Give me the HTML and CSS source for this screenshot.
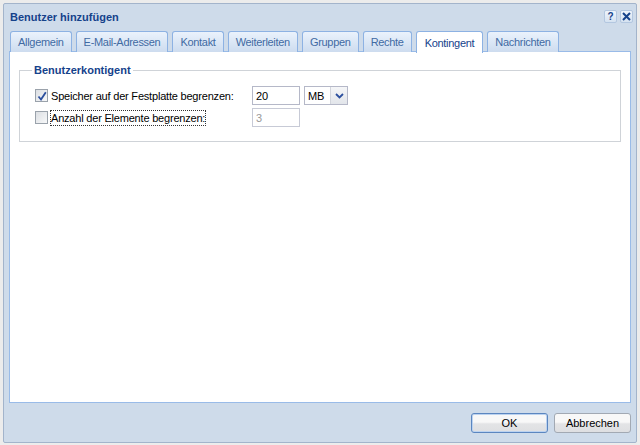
FILE: index.html
```html
<!DOCTYPE html>
<html lang="de">
<head>
<meta charset="utf-8">
<title>Benutzer hinzufügen</title>
<link rel="stylesheet" href="styles.css">
</head>
<body>
<div class="window">
  <div class="header">
    <span class="title">Benutzer hinzufügen</span>
    <div class="tools">
      <span class="tool">?</span>
      <span class="tool">
        <svg width="9" height="9" viewBox="0 0 9 9"><path d="M1 1L8 8M8 1L1 8" stroke="#15428b" stroke-width="2"/></svg>
      </span>
    </div>
  </div>
  <div class="tabs">
    <span class="tab">Allgemein</span>
    <span class="tab">E-Mail-Adressen</span>
    <span class="tab">Kontakt</span>
    <span class="tab">Weiterleiten</span>
    <span class="tab">Gruppen</span>
    <span class="tab">Rechte</span>
    <span class="tab active">Kontingent</span>
    <span class="tab">Nachrichten</span>
  </div>
  <div class="panel">
    <fieldset class="group">
      <legend>Benutzerkontigent</legend>
      <div class="row">
        <span class="check checked">
          <svg width="10" height="10" viewBox="0 0 10 10"><path d="M1.5 5.5L4 8.5L8.8 1.2" stroke="#2c4f9e" stroke-width="1.8" fill="none"/></svg>
        </span>
        <span class="label"><span class="text">Speicher auf der Festplatte begrenzen:</span></span>
        <span class="input">20</span>
        <span class="select"><span class="selval">MB</span><span class="arrow"><svg width="9" height="6" viewBox="0 0 9 6"><path d="M1 1L4.5 4.5L8 1" stroke="#2c4f9e" stroke-width="1.8" fill="none"/></svg></span></span>
      </div>
      <div class="row">
        <span class="check"></span>
        <span class="label"><span class="text focus">Anzahl der Elemente begrenzen:</span></span>
        <span class="input disabled">3</span>
      </div>
    </fieldset>
  </div>
  <div class="footer">
    <span class="btn default">OK</span>
    <span class="btn">Abbrechen</span>
  </div>
</div>
</body>
</html>
```
FILE: styles.css
```css
html, body {
  margin: 0;
  padding: 0;
}
body {
  background: #ececec;
  padding: 3px 3px 0 3px;
  font-family: "Liberation Sans", Arial, sans-serif;
  font-size: 11px;
  color: #000;
}
.window {
  box-sizing: border-box;
  height: 440px;
  border: 1px solid #a3b4cb;
  border-radius: 2px;
  background: #cedbea;
  display: flex;
  flex-direction: column;
  padding: 0 5px;
}
.header {
  height: 23px;
  display: flex;
  align-items: center;
  justify-content: space-between;
  padding-left: 1px;
}
.title {
  font-weight: bold;
  color: #15428b;
  font-size: 11px;
  padding-top: 2px;
}
.tools {
  display: flex;
  gap: 3px;
  margin-right: -2px;
  padding-top: 2px;
}
.tool {
  width: 11px;
  height: 11px;
  background: linear-gradient(#eef4fb, #d5e2f1);
  border: 1px solid #b3c7e0;
  border-radius: 2px;
  display: flex;
  align-items: center;
  justify-content: center;
  font-weight: bold;
  font-size: 10px;
  color: #15428b;
}
.tabs {
  display: flex;
  gap: 4px;
  padding-left: 1px;
  padding-top: 4px;
  height: 20px;
  position: relative;
  z-index: 1;
  letter-spacing: -0.3px;
}
.tab {
  box-sizing: border-box;
  height: 21px;
  padding: 0 7px;
  border: 1px solid #8db2e3;
  border-bottom: none;
  border-radius: 3px 3px 0 0;
  background: linear-gradient(#eaf2fc, #cddcef);
  color: #416aa3;
  display: flex;
  align-items: center;
}
.tab.active {
  background: #fff;
  color: #15428b;
  height: 22px;
  padding: 0 8px;
}
.panel {
  flex: 1;
  background: #fff;
  border: 1px solid #99bbe8;
  padding: 12px 9px 0 9px;
}
.group {
  margin: 0;
  border: 1px solid #cfd3d8;
  padding: 10px 10px 14px 15px;
  display: flex;
  flex-direction: column;
  gap: 3px;
}
.group legend {
  font-weight: bold;
  color: #15428b;
  font-size: 11px;
  padding: 0 2px;
  margin-left: -3px;
}
.row {
  display: flex;
  align-items: center;
  height: 19px;
  letter-spacing: -0.2px;
}
.check {
  box-sizing: border-box;
  width: 13px;
  height: 13px;
  border: 1px solid #9aa2ab;
  background: linear-gradient(135deg, #dcdfe3, #f7f8f9);
  display: flex;
  align-items: center;
  justify-content: center;
  margin-right: 2px;
}
.label {
  width: 201px;
  padding-left: 1px;
  display: flex;
}
.text.focus {
  outline: 1px dotted #333;
  height: 14px;
  line-height: 14px;
}
.input {
  box-sizing: border-box;
  width: 48px;
  height: 19px;
  border: 1px solid #b5b8c8;
  padding: 0 3px;
  display: flex;
  align-items: center;
  background: #fff;
}
.input.disabled {
  color: #999;
  border-color: #c7cad6;
}
.select {
  box-sizing: border-box;
  margin-left: 4px;
  width: 44px;
  height: 19px;
  border: 1px solid #b5b8c8;
  display: flex;
}
.selval {
  flex: 1;
  padding-left: 3px;
  display: flex;
  align-items: center;
}
.arrow {
  width: 16px;
  background: linear-gradient(#f5f6f8, #e2e5ea);
  border-left: 1px solid #d2d5dc;
  display: flex;
  align-items: center;
  justify-content: center;
}
.footer {
  height: 38px;
  display: flex;
  align-items: center;
  justify-content: flex-end;
  gap: 6px;
  padding-top: 1px;
}
.btn {
  box-sizing: border-box;
  width: 77px;
  height: 20px;
  border: 1px solid #a2a9b3;
  border-radius: 3px;
  background: linear-gradient(#f8f8f8 45%, #e3e4e6 55%, #dedfe2);
  display: flex;
  align-items: center;
  justify-content: center;
}
.btn.default {
  border-color: #5b86c0;
  box-shadow: inset 0 0 0 1px #bcd3f0;
}
```
